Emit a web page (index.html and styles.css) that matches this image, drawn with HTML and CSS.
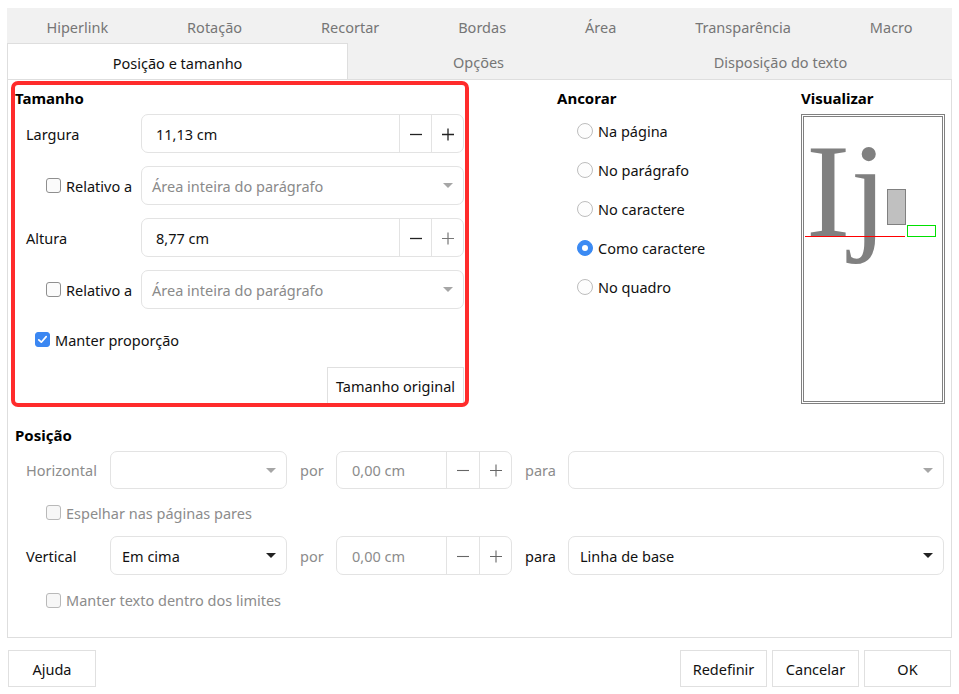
FILE: index.html
```html
<!DOCTYPE html>
<html lang="pt">
<head>
<meta charset="utf-8">
<title>Posição e tamanho</title>
<link rel="stylesheet" href="styles.css">
</head>
<body>
<div class="dialog">
  <div class="tabs tabs-back">
    <div class="tab">Hiperlink</div>
    <div class="tab">Rotação</div>
    <div class="tab">Recortar</div>
    <div class="tab">Bordas</div>
    <div class="tab">Área</div>
    <div class="tab">Transparência</div>
    <div class="tab">Macro</div>
  </div>
  <div class="tabs tabs-front">
    <div class="tab active">Posição e tamanho</div>
    <div class="tab">Opções</div>
    <div class="tab">Disposição do texto</div>
  </div>

  <div class="panel">
    <div class="top">
      <section class="size">
        <h3 class="heading">Tamanho</h3>
        <div class="rows">
          <div class="row">
            <span class="lbl">Largura</span>
            <div class="spin wide">
              <span class="value">11,13 cm</span>
              <span class="sbtn"><svg width="14" height="14" viewBox="0 0 14 14"><path d="M1 7.5H13" stroke="#222" stroke-width="1.3"/></svg></span>
              <span class="sbtn"><svg width="14" height="14" viewBox="0 0 14 14"><path d="M1 7.5H13M7 1.5V13.5" stroke="#222" stroke-width="1.3"/></svg></span>
            </div>
          </div>
          <div class="row">
            <span class="lbl sub"><span class="box"></span>Relativo a</span>
            <div class="combo wide dis"><span>Área inteira do parágrafo</span><span class="arrow"></span></div>
          </div>
          <div class="row">
            <span class="lbl">Altura</span>
            <div class="spin wide">
              <span class="value">8,77 cm</span>
              <span class="sbtn"><svg width="14" height="14" viewBox="0 0 14 14"><path d="M1 7.5H13" stroke="#222" stroke-width="1.3"/></svg></span>
              <span class="sbtn"><svg width="14" height="14" viewBox="0 0 14 14"><path d="M1 7.5H13M7 1.5V13.5" stroke="#777" stroke-width="1.2"/></svg></span>
            </div>
          </div>
          <div class="row">
            <span class="lbl sub"><span class="box"></span>Relativo a</span>
            <div class="combo wide dis"><span>Área inteira do parágrafo</span><span class="arrow"></span></div>
          </div>
        </div>
        <div class="keep">
          <span class="box checked"><svg width="11" height="11" viewBox="0 0 11 11"><path d="M1.8 5.8L4.3 8.2L9.2 2.6" fill="none" stroke="#fff" stroke-width="1.7" stroke-linecap="round" stroke-linejoin="round"/></svg></span>Manter proporção
        </div>
        <div class="orig-wrap"><button class="orig">Tamanho original</button></div>
      </section>

      <section class="anchor">
        <h3 class="heading">Ancorar</h3>
        <div class="radios">
          <div class="radio-row"><span class="radio"></span>Na página</div>
          <div class="radio-row"><span class="radio"></span>No parágrafo</div>
          <div class="radio-row"><span class="radio"></span>No caractere</div>
          <div class="radio-row"><span class="radio on"></span>Como caractere</div>
          <div class="radio-row"><span class="radio"></span>No quadro</div>
        </div>
      </section>

      <section class="preview-col">
        <h3 class="heading">Visualizar</h3>
        <div class="preview">
          <div class="preview-inner">
            <svg width="138" height="284" viewBox="804 117 138 284">
              <text x="806" y="236" font-family="Liberation Serif" font-size="133" fill="#808080">Ij</text>
              <rect x="887.5" y="189.5" width="18" height="35" fill="#c0c0c0" stroke="#808080"/>
              <rect x="907.5" y="225.5" width="28" height="11" fill="none" stroke="#00e000"/>
              <line x1="805" y1="236.5" x2="905" y2="236.5" stroke="#ff0000"/>
            </svg>
          </div>
        </div>
      </section>
    </div>

    <section class="position">
      <h3 class="heading">Posição</h3>
      <div class="prow">
        <span class="plbl dis-t">Horizontal</span>
        <div class="combo ch dis"><span></span><span class="arrow"></span></div>
        <span class="por dis-t">por</span>
        <div class="spin ps dis-t">
          <span class="value">0,00 cm</span>
          <span class="sbtn"><svg width="14" height="14" viewBox="0 0 14 14"><path d="M1 7.5H13" stroke="#666" stroke-width="1.1"/></svg></span>
          <span class="sbtn"><svg width="14" height="14" viewBox="0 0 14 14"><path d="M1 7.5H13M7 1.5V13.5" stroke="#666" stroke-width="1.1"/></svg></span>
        </div>
        <span class="para dis-t">para</span>
        <div class="combo cw dis"><span></span><span class="arrow"></span></div>
      </div>
      <div class="mirror dis-t"><span class="box light"></span>Espelhar nas páginas pares</div>
      <div class="prow v">
        <span class="plbl">Vertical</span>
        <div class="combo ch"><span>Em cima</span><span class="arrow"></span></div>
        <span class="por dis-t">por</span>
        <div class="spin ps dis-t">
          <span class="value">0,00 cm</span>
          <span class="sbtn"><svg width="14" height="14" viewBox="0 0 14 14"><path d="M1 7.5H13" stroke="#666" stroke-width="1.1"/></svg></span>
          <span class="sbtn"><svg width="14" height="14" viewBox="0 0 14 14"><path d="M1 7.5H13M7 1.5V13.5" stroke="#666" stroke-width="1.1"/></svg></span>
        </div>
        <span class="para">para</span>
        <div class="combo cw"><span>Linha de base</span><span class="arrow"></span></div>
      </div>
      <div class="inside dis-t"><span class="box light"></span>Manter texto dentro dos limites</div>
    </section>
  </div>

  <div class="footer">
    <button class="fbtn">Ajuda</button>
    <div class="fright">
      <button class="fbtn">Redefinir</button>
      <button class="fbtn">Cancelar</button>
      <button class="fbtn">OK</button>
    </div>
  </div>
</div>
</body>
</html>
```

FILE: styles.css
```css
*, *::before, *::after { box-sizing: border-box; }

body {
  margin: 0;
  background: #fff;
  font-family: "Noto Sans", "Open Sans", sans-serif;
  font-size: 14.5px;
  color: #1a1a1a;
}

.dialog {
  padding: 8px 0 0 7px;
  width: 959px;
}

/* tabs */
.tabs {
  display: flex;
  width: 945px;
  background: #f1f1f1;
}
.tabs-back { height: 35px; }
.tabs-front { height: 36px; }
.tab {
  flex: 1 1 auto;
  display: flex;
  align-items: center;
  justify-content: center;
  white-space: nowrap;
  color: #767676;
}
.tabs-back .tab { padding-top: 3px; }
.tabs-front .tab { padding-top: 2px; }
.tab.active {
  background: #fff;
  color: #111;
  border: 1px solid #dedede;
  border-bottom: none;
}

/* panel */
.panel {
  width: 945px;
  height: 559px;
  border: 1px solid #dedede;
  padding: 8px 0 0 7px;
}

.heading {
  margin: 0;
  height: 20px;
  line-height: 20px;
  font-size: 15px;
  font-weight: 700;
  color: #000;
}

.top {
  display: grid;
  grid-template-columns: 542px 244px 144px;
  height: 316px;
}

/* size section with highlight frame */
.size {
  position: relative;
}
.size::after {
  content: "";
  position: absolute;
  left: -4px;
  top: -7px;
  width: 458px;
  height: 326px;
  border: 4px solid #ff2b2b;
  border-radius: 7px;
  pointer-events: none;
}

.rows {
  display: flex;
  flex-direction: column;
  gap: 13px;
  margin-top: 6px;
  width: 449px;
}
.row {
  display: flex;
  align-items: center;
  height: 39px;
}
.lbl {
  width: 126px;
  padding-left: 11px;
  display: flex;
  align-items: center;
  color: #111;
}
.lbl.sub { padding-left: 31px; }

.box {
  flex: none;
  width: 15px;
  height: 15px;
  margin-right: 5px;
  border: 1px solid #8f8f8f;
  border-radius: 3px;
  background: #fbfbfb;
  display: inline-flex;
  align-items: center;
  justify-content: center;
}
.box.light { border-color: #b9b9b9; background: #f7f7f7; }
.box.checked { background: #3b87f2; border-color: #3b87f2; }

/* fields */
.spin {
  display: flex;
  height: 39px;
  border: 1px solid #e3e3e3;
  border-radius: 7px;
  background: #fff;
}
.spin.wide { width: 323px; }
.spin .value {
  flex: 1;
  display: flex;
  align-items: center;
  padding-left: 14px;
  color: #111;
}
.sbtn {
  width: 32px;
  border-left: 1px solid #e3e3e3;
  display: flex;
  align-items: center;
  justify-content: center;
}

.combo {
  display: flex;
  align-items: center;
  justify-content: space-between;
  height: 39px;
  border: 1px solid #e3e3e3;
  border-radius: 7px;
  padding: 0 10px 0 10px;
  background: #fff;
  color: #111;
}
.combo.wide { width: 323px; }
.combo.dis { color: #8a8a8a; }
.arrow {
  width: 0;
  height: 0;
  border-left: 5px solid transparent;
  border-right: 5px solid transparent;
  border-top: 5px solid #222;
}
.combo.dis .arrow { border-top-color: #a6a6a6; }

.keep {
  margin-top: 11px;
  height: 39px;
  padding-left: 20px;
  display: flex;
  align-items: center;
  color: #111;
}
.orig-wrap {
  width: 449px;
  margin-top: 8px;
  display: flex;
  justify-content: flex-end;
}
.orig {
  width: 137px;
  height: 37px;
  border: 1px solid #e0e0e0;
  background: #fff;
  font: inherit;
  color: #111;
  padding: 0;
}

/* anchor */
.radios { margin-top: 3px; }
.radio-row {
  height: 39px;
  display: flex;
  align-items: center;
  padding-left: 20px;
  color: #111;
}
.radio {
  flex: none;
  width: 16px;
  height: 16px;
  margin-right: 5px;
  border-radius: 50%;
  border: 1px solid #bdbdbd;
  background: #fdfdfd;
  display: flex;
  align-items: center;
  justify-content: center;
}
.radio.on { background: #3b8af3; border-color: #3b8af3; }
.radio.on::after {
  content: "";
  width: 6px;
  height: 6px;
  border-radius: 50%;
  background: #fff;
}

/* preview */
.preview {
  margin-top: 6px;
  width: 144px;
  height: 290px;
  border: 1px solid #808080;
  padding: 1px;
}
.preview-inner {
  width: 100%;
  height: 100%;
  border: 1px solid #808080;
  background: #fff;
}
.preview-inner svg { display: block; }

/* position */
.position { margin-top: 21px; }
.prow {
  display: flex;
  align-items: center;
  height: 38px;
  margin-top: 6px;
}
.prow.v { height: 39px; margin-top: 0; }
.plbl { width: 95px; padding-left: 11px; color: #111; }
.dis-t { color: #8c8c8c; }
.prow .dis-t, .mirror.dis-t, .inside.dis-t { color: #8c8c8c; }
.combo.ch { width: 177px; height: 100%; }
.combo.cw { width: 376px; height: 100%; }
.prow .combo.ch { padding-left: 11px; }
.prow .combo.cw { padding-left: 11px; }
.por { width: 49px; padding-left: 13px; }
.para { width: 56px; padding-left: 13px; color: #111; }
.para.dis-t { color: #8c8c8c; }
.spin.ps { width: 176px; height: 100%; }
.spin.ps .value { padding-left: 15px; color: #8c8c8c; }
.spin.ps .sbtn { width: 33px; }
.spin.ps .sbtn:last-child { width: 32px; }

.mirror {
  height: 47px;
  display: flex;
  align-items: center;
  padding-left: 31px;
}
.inside {
  margin-top: 13px;
  height: 24px;
  display: flex;
  align-items: center;
  padding-left: 31px;
}

/* footer */
.footer {
  width: 945px;
  margin-top: 12px;
  padding: 0 1px;
  display: flex;
  justify-content: space-between;
}
.fright { display: flex; gap: 5px; }
.fbtn {
  width: 88px;
  height: 37px;
  border: 1px solid #e0e0e0;
  background: #fff;
  font: inherit;
  color: #111;
  padding: 0;
}
.fright .fbtn { width: 87px; }
```
